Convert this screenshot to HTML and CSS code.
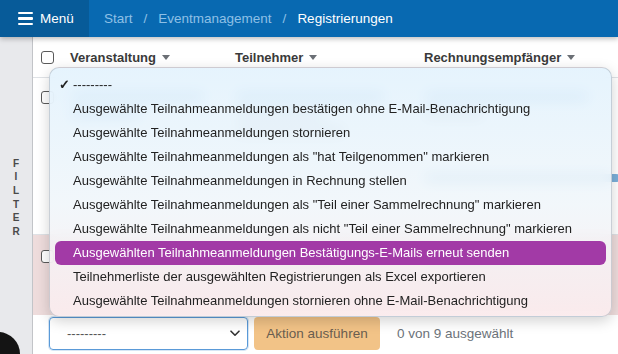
FILE: index.html
```html
<!DOCTYPE html>
<html lang="de">
<head>
<meta charset="utf-8">
<link rel="stylesheet" href="styles.css">
</head>
<body>
<header class="topbar">
  <div class="menu">
    <span class="burger"><i></i><i></i><i></i></span>
    <span class="menu-label">Menü</span>
  </div>
  <nav class="crumbs">
    <span class="crumb">Start</span>
    <span class="sep">/</span>
    <span class="crumb">Eventmanagement</span>
    <span class="sep">/</span>
    <span class="crumb current">Registrierungen</span>
  </nav>
</header>
<div class="layout">
  <aside class="sidebar">
    <div class="filter"><span>F</span><span>I</span><span>L</span><span>T</span><span>E</span><span>R</span></div>
    <div class="corner"></div>
  </aside>
  <main class="main">
    <div class="row head">
      <span class="cb"></span>
      <span class="th">Veranstaltung <b class="tri"></b></span>
      <span class="th">Teilnehmer <b class="tri"></b></span>
      <span class="th">Rechnungsempfänger <b class="tri"></b></span>
    </div>
    <div class="row r1">
      <span class="cb"></span>
      <span class="cell"><i class="bar" style="width:135px"></i><i class="bar" style="width:70px"></i></span>
      <span class="cell"><i class="bar" style="width:150px"></i><i class="bar grey" style="width:90px"></i><i class="bar grey" style="width:110px"></i></span>
      <span class="cell"><i class="bar" style="width:165px"></i><i class="bar grey" style="width:60px"></i><i class="bar link" style="width:196px"></i></span>
    </div>
    <div class="row r3">
      <span class="cb"></span>
      <span class="cell"><i class="bar" style="width:120px"></i></span>
      <span class="cell"><i class="bar grey" style="width:100px"></i></span>
      <span class="cell"><i class="bar" style="width:90px"></i></span>
    </div>
    <div class="actions">
      <div class="select"><span>---------</span>
        <svg class="chev" width="10" height="7" viewBox="0 0 10 7"><path d="M1 1.2 5 5.2 9 1.2" fill="none" stroke="#333" stroke-width="1.6" stroke-linecap="round" stroke-linejoin="round"/></svg>
      </div>
      <button class="go">Aktion ausführen</button>
      <span class="count">0 von 9 ausgewählt</span>
    </div>
  </main>
</div>
<ul class="popup">
  <li><span class="check">✓</span>---------</li>
  <li>Ausgewählte Teilnahmeanmeldungen bestätigen ohne E-Mail-Benachrichtigung</li>
  <li>Ausgewählte Teilnahmeanmeldungen stornieren</li>
  <li>Ausgewählte Teilnahmeanmeldungen als "hat Teilgenommen" markieren</li>
  <li>Ausgewählte Teilnahmeanmeldungen in Rechnung stellen</li>
  <li>Ausgewählte Teilnahmeanmeldungen als "Teil einer Sammelrechnung" markieren</li>
  <li>Ausgewählte Teilnahmeanmeldungen als nicht "Teil einer Sammelrechnung" markieren</li>
  <li class="active">Ausgewählten Teilnahmeanmeldungen Bestätigungs-E-Mails erneut senden</li>
  <li>Teilnehmerliste der ausgewählten Registrierungen als Excel exportieren</li>
  <li>Ausgewählte Teilnahmeanmeldungen stornieren ohne E-Mail-Benachrichtigung</li>
</ul>
</body>
</html>
```
FILE: styles.css
```css
* { box-sizing: border-box; }
html, body { margin: 0; padding: 0; }
body {
  width: 618px; height: 354px; overflow: hidden;
  font-family: "Liberation Sans", Arial, sans-serif;
  font-size: 13px; color: #222; background: #fff;
  position: relative;
}
.topbar {
  height: 37px; display: flex; align-items: stretch;
  background: #0869b1; color: #fff;
  box-shadow: 0 2px 5px rgba(0,0,0,0.25);
  position: relative; z-index: 2;
}
.menu {
  width: 89px; flex-shrink: 0; background: #075b99; display: flex; align-items: center;
  padding-left: 18px; gap: 7px;
}
.burger { display: flex; flex-direction: column; gap: 3px; width: 15px; }
.burger i { display: block; height: 2.3px; background: #fff; border-radius: 1px; }
.menu-label { font-size: 13.5px; }
.crumbs { display: flex; align-items: center; padding-left: 15px; font-size: 13.5px; }
.crumb { color: #8ec0e6; }
.crumb.current { color: #fff; }
.sep { color: #8ec0e6; margin: 0 11px; }

.layout { display: flex; height: 317px; }
.sidebar {
  width: 33px; flex-shrink: 0; background: #e8e9ec; border-right: 1px solid #c2c4c8;
  display: flex; align-items: center; justify-content: center;
  position: relative; overflow: hidden;
}
.filter { display: flex; flex-direction: column; align-items: center; font-size: 10px; font-weight: bold; color: #4a4a4a; line-height: 13.6px; padding-top: 4px; }
.corner { position: absolute; left: -6px; bottom: -4px; width: 26px; height: 26px; background: #141414; border-top-right-radius: 22px; }

.main { flex: 1; min-width: 0; overflow: hidden; padding-left: 8px; display: flex; flex-direction: column; }
.row { display: grid; grid-template-columns: 29px 165px 189px 1fr; border-bottom: 1px solid #dfe2e6; margin-left: -8px; padding-left: 8px; }
.head { height: 41px; align-items: center; }
.th { font-weight: bold; color: #3a3a3a; display: flex; align-items: center; gap: 6px; }
.tri { width: 0; height: 0; border-left: 4.5px solid transparent; border-right: 4.5px solid transparent; border-top: 5px solid #6b6f75; }
.cb { width: 13px; height: 13px; border: 1px solid #5a5a5a; border-radius: 3px; background: #fff; }
.row .cb { align-self: start; }
.head .cb { align-self: center; }
.r1 { height: 157px; padding-top: 13px; }
.r3 { height: 80px; padding-top: 15px; background: #eedcdc; border-bottom: none; }
.cell { display: flex; flex-direction: column; gap: 9px; padding-top: 2px; }
.bar { display: block; height: 8px; border-radius: 4px; background: #5a9bd0; opacity: 0.8; flex-shrink: 0; }
.bar.grey { background: #9aa3ad; }
.bar.link { margin-top: 47px; }

.actions { display: flex; align-items: center; padding: 2px 0 0 8px; gap: 6px; }
.select {
  width: 199px; height: 33px; border: 1px solid #5a9ad8; border-radius: 4px;
  display: flex; align-items: center; justify-content: space-between; padding: 0 7px 0 17px;
  color: #555; box-shadow: 0 0 0 1px rgba(90,154,216,0.25); flex-shrink: 0;
}
.go {
  height: 33px; width: 126px; flex-shrink: 0; border: none; border-radius: 4px; background: #f2c387;
  color: #6a5e50; font: inherit; font-size: 13.5px; padding: 0;
}
.count { margin-left: 11px; color: #6c737a; font-size: 13.5px; white-space: nowrap; }

.popup {
  position: absolute; left: 49px; top: 67px; width: 563px; height: 250px;
  margin: 0; padding: 5px; list-style: none;
  border-radius: 10px; border: 1px solid rgba(150,160,170,0.45);
  background: linear-gradient(180deg, rgba(226,242,253,0.88) 0%, rgba(240,246,250,0.88) 55%, rgba(251,236,238,0.88) 100%);
  backdrop-filter: blur(7px);
  box-shadow: 0 4px 14px rgba(0,0,0,0.18);
  z-index: 5;
}
.popup li {
  height: 24px; line-height: 24px; padding-left: 18px; position: relative;
  color: #222; border-radius: 6px; white-space: nowrap;
}
.popup li.active { background: #a23aa6; color: #fff; }
.check { position: absolute; left: 4px; top: 0; font-size: 13px; font-weight: bold; color: #222; }
```
